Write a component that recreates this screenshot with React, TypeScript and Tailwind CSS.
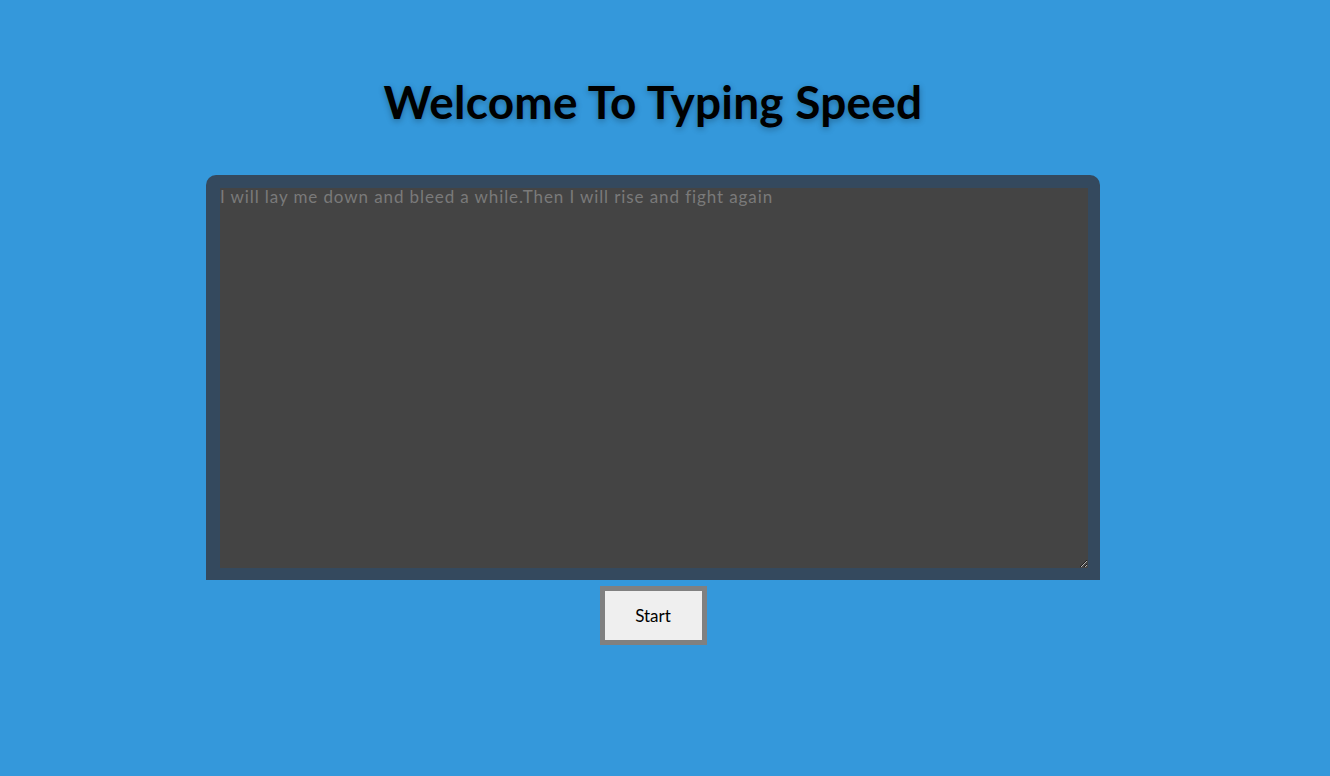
import { useState } from "react";

const App = () => {
  const [text, setText] = useState("");

  return (
    <div
      className="min-h-screen w-full bg-[#3498db] flex flex-col items-center pr-[24px]"
      style={{ fontFamily: "Lato, 'Open Sans', sans-serif" }}
    >
      <h1 className="mt-[74px] text-[46px] leading-[56px] font-bold tracking-[0.2px] text-black [text-shadow:0_2px_6px_rgba(0,0,0,0.3)]">
        Welcome To Typing Speed
      </h1>

      <div className="mt-[45px] w-[894px] bg-[#34495e] rounded-t-[10px] pt-[13px] pb-[12px] pl-[14px] pr-[12px]">
        <textarea
          value={text}
          onChange={(e) => setText(e.target.value)}
          placeholder="I will lay me down and bleed a while.Then I will rise and fight again"
          className="block w-[868px] h-[380px] bg-[#444444] text-[#cccccc] placeholder:text-[#7a7a7a] text-[17px] leading-[18px] tracking-[0.9px] outline-none resize"
        />
      </div>

      <button className="mt-[6px] w-[107px] h-[59px] bg-[#efefef] border-[5px] border-[#808080] text-[17px] text-black">
        Start
      </button>
    </div>
  );
};

export default App;
